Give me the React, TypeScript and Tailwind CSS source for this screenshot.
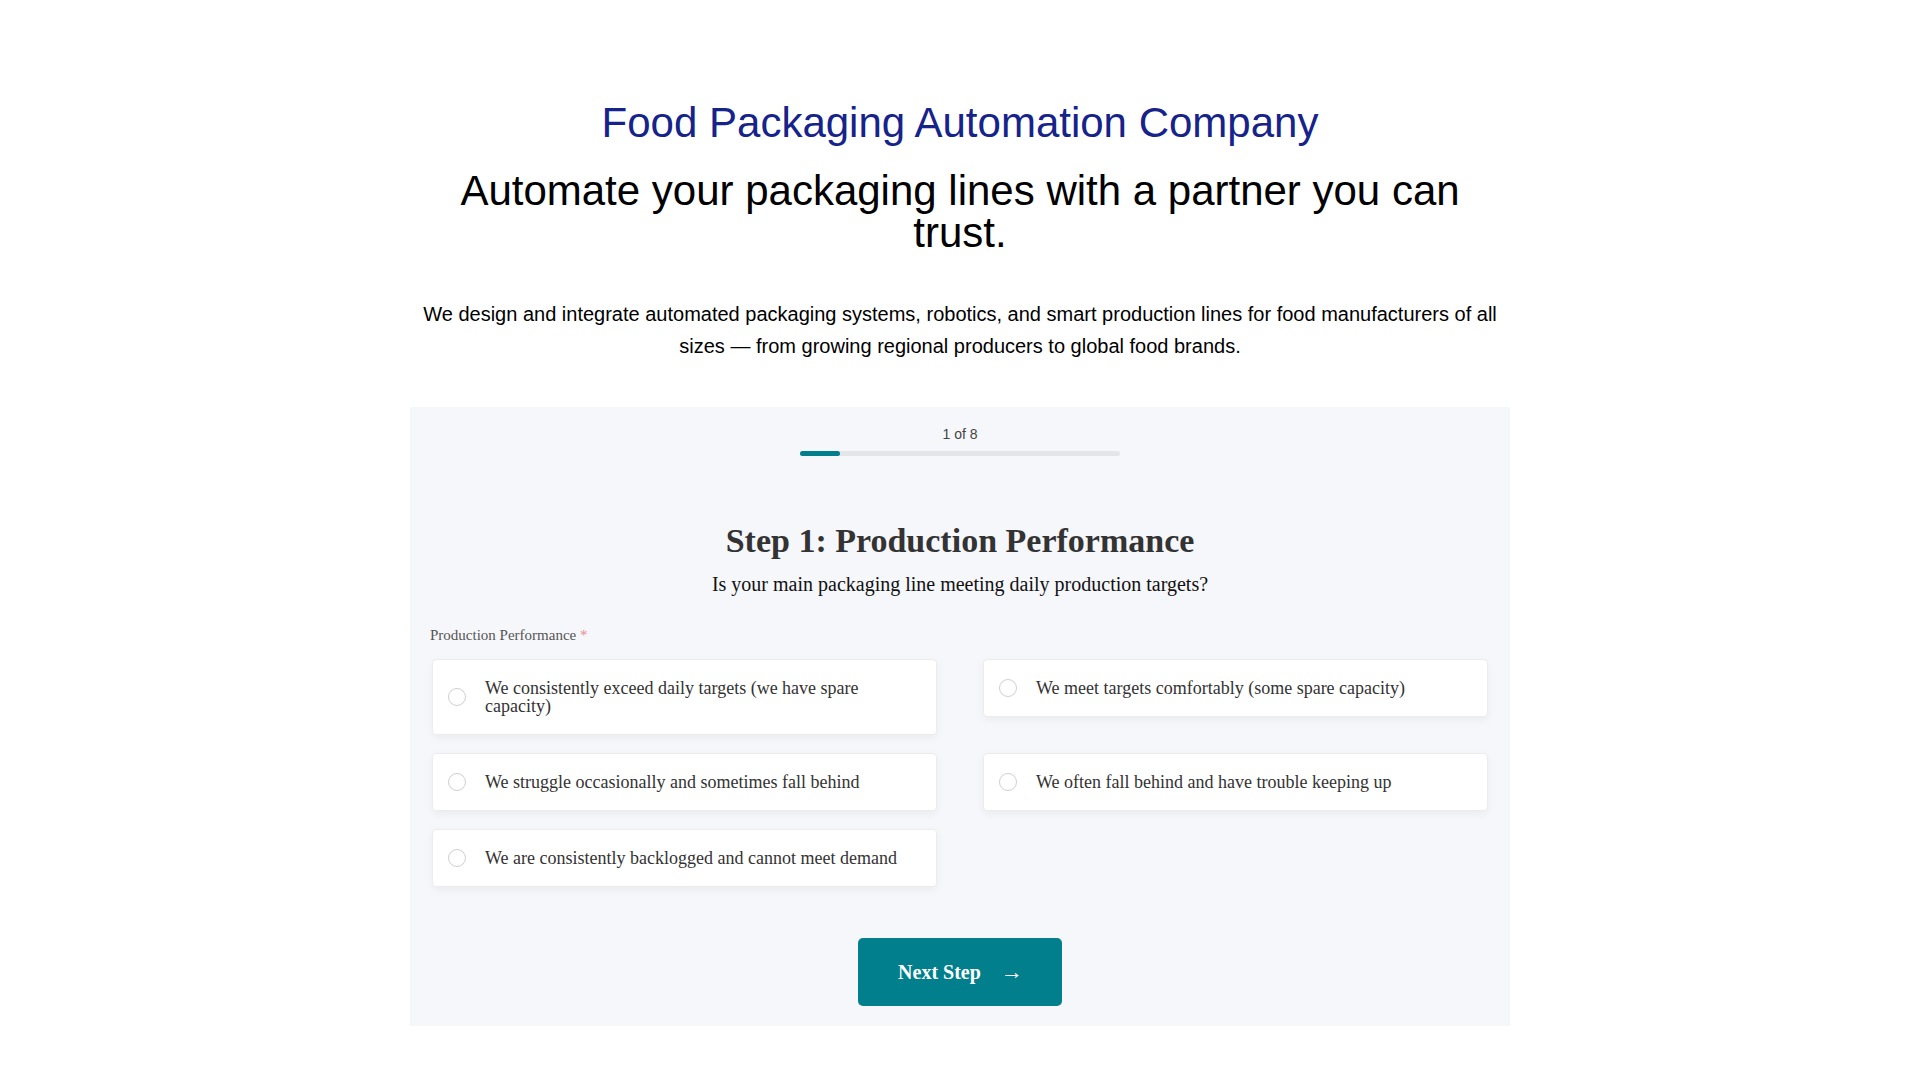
import { useState } from 'react';

const options = [
  'We consistently exceed daily targets (we have spare capacity)',
  'We meet targets comfortably (some spare capacity)',
  'We struggle occasionally and sometimes fall behind',
  'We often fall behind and have trouble keeping up',
  'We are consistently backlogged and cannot meet demand',
];

const sans = "font-['Liberation_Sans',Arial,sans-serif]";
const serif = "font-['Liberation_Serif','Times_New_Roman',serif]";

function OptionCard({ label, checked, onSelect }: { label: string; checked: boolean; onSelect: () => void }) {
  return (
    <label
      onClick={onSelect}
      className="flex items-center gap-[19px] rounded-[4px] border border-[#ececec] bg-white py-[19px] pl-[15px] pr-[14px] shadow-[0_3px_8px_rgba(0,0,0,0.05)] cursor-pointer"
    >
      <span className="flex h-[18px] w-[18px] shrink-0 items-center justify-center rounded-full border border-[#cfcfcf] bg-white">
        {checked && <span className="h-2.5 w-2.5 rounded-full bg-[#017f8c]" />}
      </span>
      <span className="text-left text-[18px] leading-[18px] text-[#333]">{label}</span>
    </label>
  );
}

export default function App() {
  const [selected, setSelected] = useState<number | null>(null);

  return (
    <div className={`min-h-screen bg-white flex justify-center ${sans}`}>
      <div className="w-[1100px] pt-[98px] pb-12 text-center">
        <h1 className="text-[42px] leading-[50px] font-normal text-[#16238a]">
          Food Packaging Automation Company
        </h1>
        <h2 className="mt-[22px] text-[42px] leading-[42px] font-normal text-black">
          Automate your packaging lines with a partner you can trust.
        </h2>
        <p className="mt-[44px] text-[20px] leading-[32px] text-black">
          We design and integrate automated packaging systems, robotics, and smart production lines for food manufacturers of all sizes — from growing regional producers to global food brands.
        </p>

        <div className="mt-[45px] bg-[#f6f7fb] px-5 pt-[19px] pb-5">
          <div className="text-[14px] leading-4 text-[#444]">1 of 8</div>
          <div className="mx-auto mt-[9px] h-[5px] w-[320px] rounded-full bg-[#e4e5e9]">
            <div className="h-full w-[40px] rounded-full bg-[#017f8c]" />
          </div>

          <div className={serif}>
            <h3 className="mt-[64px] text-[34px] leading-[41px] font-bold text-[#333]">
              Step 1: Production Performance
            </h3>
            <p className="mt-[11px] text-[20px] leading-6 text-[#111]">
              Is your main packaging line meeting daily production targets?
            </p>

            <div className="mt-[30px] text-left text-[15px] leading-[18px] text-[#555]">
              Production Performance <span className="text-[#ec8a8a]">*</span>
            </div>

            <div className="mt-[15px] grid grid-cols-2 items-start gap-x-[46px] gap-y-[18px] px-[2px]">
              {options.map((o, i) => (
                <OptionCard key={o} label={o} checked={selected === i} onSelect={() => setSelected(i)} />
              ))}
            </div>

            <button className="mt-[51px] inline-flex h-[68px] items-center rounded-[5px] bg-[#017f8c] pl-10 pr-[39px] text-[20px] font-bold text-white">
              Next Step
              <span className="ml-5 text-[22px] leading-none font-normal">→</span>
            </button>
          </div>
        </div>
      </div>
    </div>
  );
}
